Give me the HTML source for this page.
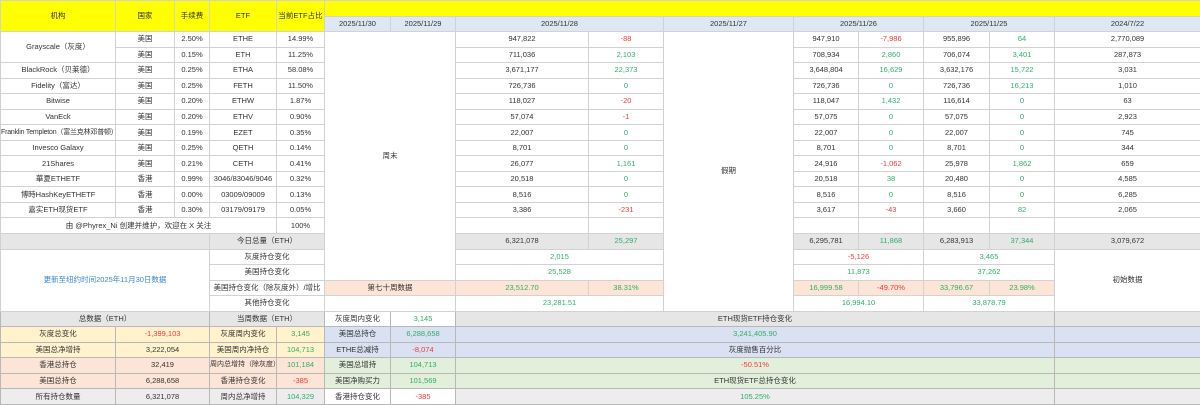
<!DOCTYPE html>
<html><head><meta charset="utf-8"><style>
html,body{margin:0;padding:0;background:#fff;}
table{border-collapse:collapse;table-layout:fixed;width:1200px;font-family:"Liberation Sans","Noto Sans CJK SC",sans-serif;font-size:7.5px;color:#333;}
td{border:1px solid #d2d2d2;text-align:center;padding:0;height:14.5px;line-height:10px;overflow:hidden;white-space:nowrap;}
tr{height:15.54px;}
.y{background:#ffff00;}
.b{background:#dde8f3;}
.g{background:#e6e6e6;}
.p{background:#fce4d6;}
.ly{background:#fff2cc;}
.lb{background:#d9e1f2;}
.lg{background:#e2efda;}
.lx{background:#ededed;}
.r{color:#f03a3a;}
.n{color:#2eae6a;}
.bl{color:#3b86c8;}
.bot td{border-color:#b8b8b8;}
</style></head><body>
<table>
<colgroup><col style="width:115px"><col style="width:59px"><col style="width:35px"><col style="width:67px"><col style="width:48px"><col style="width:66px"><col style="width:65px"><col style="width:133px"><col style="width:75px"><col style="width:130px"><col style="width:65px"><col style="width:65px"><col style="width:66px"><col style="width:65px"><col style="width:146px"></colgroup>
<tr><td class="y" rowspan="2">机构</td><td class="y" rowspan="2">国家</td><td class="y" rowspan="2">手续费</td><td class="y" rowspan="2">ETF</td><td class="y" rowspan="2">当前ETF占比</td><td class="y" colspan="10"></td></tr>
<tr><td class="b">2025/11/30</td><td class="b">2025/11/29</td><td class="b" colspan="2">2025/11/28</td><td class="b">2025/11/27</td><td class="b" colspan="2">2025/11/26</td><td class="b" colspan="2">2025/11/25</td><td class="b">2024/7/22</td></tr>
<tr><td rowspan="2">Grayscale（灰度）</td><td>美国</td><td>2.50%</td><td>ETHE</td><td>14.99%</td><td colspan="2" rowspan="16">周末</td><td>947,822</td><td class="r">-88</td><td rowspan="18">假期</td><td>947,910</td><td class="r">-7,986</td><td>955,896</td><td class="n">64</td><td>2,770,089</td></tr>
<tr><td>美国</td><td>0.15%</td><td>ETH</td><td>11.25%</td><td>711,036</td><td class="n">2,103</td><td>708,934</td><td class="n">2,860</td><td>706,074</td><td class="n">3,401</td><td>287,873</td></tr>
<tr><td>BlackRock（贝莱德）</td><td>美国</td><td>0.25%</td><td>ETHA</td><td>58.08%</td><td>3,671,177</td><td class="n">22,373</td><td>3,648,804</td><td class="n">16,629</td><td>3,632,176</td><td class="n">15,722</td><td>3,031</td></tr>
<tr><td>Fidelity（富达）</td><td>美国</td><td>0.25%</td><td>FETH</td><td>11.50%</td><td>726,736</td><td class="n">0</td><td>726,736</td><td class="n">0</td><td>726,736</td><td class="n">16,213</td><td>1,010</td></tr>
<tr><td>Bitwise</td><td>美国</td><td>0.20%</td><td>ETHW</td><td>1.87%</td><td>118,027</td><td class="r">-20</td><td>118,047</td><td class="n">1,432</td><td>116,614</td><td class="n">0</td><td>63</td></tr>
<tr><td>VanEck</td><td>美国</td><td>0.20%</td><td>ETHV</td><td>0.90%</td><td>57,074</td><td class="r">-1</td><td>57,075</td><td class="n">0</td><td>57,075</td><td class="n">0</td><td>2,923</td></tr>
<tr><td style="font-size:7px;letter-spacing:-0.2px">Franklin Templeton（富兰克林邓普顿）</td><td>美国</td><td>0.19%</td><td>EZET</td><td>0.35%</td><td>22,007</td><td class="n">0</td><td>22,007</td><td class="n">0</td><td>22,007</td><td class="n">0</td><td>745</td></tr>
<tr><td>Invesco Galaxy</td><td>美国</td><td>0.25%</td><td>QETH</td><td>0.14%</td><td>8,701</td><td class="n">0</td><td>8,701</td><td class="n">0</td><td>8,701</td><td class="n">0</td><td>344</td></tr>
<tr><td>21Shares</td><td>美国</td><td>0.21%</td><td>CETH</td><td>0.41%</td><td>26,077</td><td class="n">1,161</td><td>24,916</td><td class="r">-1,062</td><td>25,978</td><td class="n">1,862</td><td>659</td></tr>
<tr><td>華夏ETHETF</td><td>香港</td><td>0.99%</td><td>3046/83046/9046</td><td>0.32%</td><td>20,518</td><td class="n">0</td><td>20,518</td><td class="n">38</td><td>20,480</td><td class="n">0</td><td>4,585</td></tr>
<tr><td>博時HashKeyETHETF</td><td>香港</td><td>0.00%</td><td>03009/09009</td><td>0.13%</td><td>8,516</td><td class="n">0</td><td>8,516</td><td class="n">0</td><td>8,516</td><td class="n">0</td><td>6,285</td></tr>
<tr><td>嘉实ETH现货ETF</td><td>香港</td><td>0.30%</td><td>03179/09179</td><td>0.05%</td><td>3,386</td><td class="r">-231</td><td>3,617</td><td class="r">-43</td><td>3,660</td><td class="n">82</td><td>2,065</td></tr>
<tr><td colspan="4">由 @Phyrex_Ni 创建并维护，欢迎在 X 关注</td><td>100%</td><td></td><td></td><td></td><td></td><td></td><td></td><td></td></tr>
<tr><td class="g" colspan="3"></td><td class="g" colspan="2">今日总量（ETH）</td><td class="g">6,321,078</td><td class="g n">25,297</td><td class="g">6,295,781</td><td class="g n">11,868</td><td class="g">6,283,913</td><td class="g n">37,344</td><td class="g">3,079,672</td></tr>
<tr><td colspan="3" rowspan="4" class="bl">更新至纽约时间2025年11月30日数据</td><td colspan="2">灰度持仓变化</td><td colspan="2" class="n">2,015</td><td colspan="2" class="r">-5,126</td><td colspan="2" class="n">3,465</td><td rowspan="4">初始数据</td></tr>
<tr><td colspan="2">美国持仓变化</td><td colspan="2" class="n">25,528</td><td colspan="2" class="n">11,873</td><td colspan="2" class="n">37,262</td></tr>
<tr><td colspan="2">美国持仓变化（除灰度外）/增比</td><td colspan="2" class="p">第七十周数据</td><td class="p n">23,512.70</td><td class="p n">38.31%</td><td class="p n">16,999.58</td><td class="p r">-49.70%</td><td class="p n">33,796.67</td><td class="p n">23.98%</td></tr>
<tr><td colspan="2">其他持仓变化</td><td colspan="2"></td><td colspan="2" class="n">23,281.51</td><td colspan="2" class="n">16,994.10</td><td colspan="2" class="n">33,878.79</td></tr>
<tr class="bot"><td colspan="3" class="g">总数据（ETH）</td><td colspan="2" class="g">当周数据（ETH）</td><td>灰度周内变化</td><td class="n">3,145</td><td colspan="7" class="g">ETH现货ETF持仓变化</td><td class="g"></td></tr>
<tr class="bot"><td class="ly">灰度总变化</td><td colspan="2" class="ly r">-1,399,103</td><td class="ly">灰度周内变化</td><td class="ly n">3,145</td><td class="lb">美国总持仓</td><td class="lb n">6,288,658</td><td colspan="7" class="lb n">3,241,405.90</td><td class="lb"></td></tr>
<tr class="bot"><td class="ly">美国总净增持</td><td colspan="2" class="ly">3,222,054</td><td class="ly">美国周内净持仓</td><td class="ly n">104,713</td><td class="lb">ETHE总减持</td><td class="lb r">-8,074</td><td colspan="7" class="lb">灰度抛售百分比</td><td class="lb"></td></tr>
<tr class="bot"><td class="p">香港总持仓</td><td colspan="2" class="p">32,419</td><td class="p" style="font-size:7px">周内总增持（除灰度）</td><td class="p n">101,184</td><td class="lg">美国总增持</td><td class="lg n">104,713</td><td colspan="7" class="lg r">-50.51%</td><td class="lg"></td></tr>
<tr class="bot"><td class="p">美国总持仓</td><td colspan="2" class="p">6,288,658</td><td class="p">香港持仓变化</td><td class="p r">-385</td><td class="lg">美国净购买力</td><td class="lg n">101,569</td><td colspan="7" class="lg">ETH现货ETF总持仓变化</td><td class="lg"></td></tr>
<tr class="bot"><td class="lx">所有持仓数量</td><td colspan="2" class="lx">6,321,078</td><td class="lx">周内总净增持</td><td class="lx n">104,329</td><td>香港持仓变化</td><td class="r">-385</td><td colspan="7" class="lx n">105.25%</td><td class="lx"></td></tr>
</table>
</body></html>
